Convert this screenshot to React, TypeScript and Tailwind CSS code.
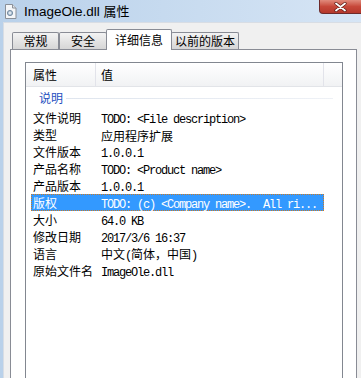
import React from 'react';

const cjkFont = '"Noto Sans CJK SC", "Noto Sans", sans-serif';

const rows: { name: string; value: string; selected?: boolean }[] = [
  { name: '文件说明', value: 'TODO: <File description>' },
  { name: '类型', value: '应用程序扩展' },
  { name: '文件版本', value: '1.0.0.1' },
  { name: '产品名称', value: 'TODO: <Product name>' },
  { name: '产品版本', value: '1.0.0.1' },
  { name: '版权', value: 'TODO: (c) <Company name>.  All ri...', selected: true },
  { name: '大小', value: '64.0 KB' },
  { name: '修改日期', value: '2017/3/6 16:37' },
  { name: '语言', value: '中文(简体，中国)' },
  { name: '原始文件名', value: 'ImageOle.dll' },
];

// SimSun-like mix: latin runs at 6px per char, CJK runs at 12px
const Mixed = ({ text }: { text: string }) => {
  const parts = text.split(/([\u3000-\u9fff\uff00-\uffef]+)/).filter(Boolean);
  return (
    <span className="whitespace-pre">
      {parts.map((p, i) =>
        /[\u3000-\u9fff\uff00-\uffef]/.test(p) ? (
          <span key={i} className="text-[12px]" style={{ fontFamily: cjkFont }}>
            {p}
          </span>
        ) : (
          <span key={i} className="text-[12px] tracking-[-1.2px] font-['Liberation_Mono',monospace]">
            {p}
          </span>
        )
      )}
    </span>
  );
};

const FileIcon = () => (
  <svg width="13" height="15" viewBox="0 0 13 15">
    <path d="M1.5 0.5h7l3.5 3.5v10.5h-10.5z" fill="#f4f6f8" stroke="#8a9098" />
    <path d="M8.5 0.5v3.5h3.5" fill="#dfe3e8" stroke="#8a9098" />
    <circle cx="6" cy="9" r="2.6" fill="#b6c8d8" stroke="#5f7890" strokeWidth="0.8" />
    <circle cx="6" cy="9" r="0.9" fill="#f4f6f8" />
  </svg>
);

const Tab = ({ label, active, w }: { label: string; active?: boolean; w: string }) => (
  <div
    className={`${w} shrink-0 whitespace-nowrap flex items-center justify-center border border-[#898c95] border-b-0 text-[12px] text-black rounded-t-[2px] ${
      active
        ? 'h-[21px] -mb-[1px] bg-white relative z-10 -mx-[1px]'
        : 'h-[17px] bg-gradient-to-b from-[#f3f3f3] to-[#d6d6d6]'
    }`}
    style={{ fontFamily: cjkFont }}
  >
    {label}
  </div>
);

export default function App() {
  return (
    <div className="w-[361px] h-[378px] overflow-hidden flex flex-col bg-gradient-to-r from-[#b9d1ea] to-[#d6e5f5]">
      {/* title bar */}
      <div className="h-[22px] shrink-0 flex items-center relative pl-[4px]">
        <FileIcon />
        <span className="ml-[7px] text-[13.5px] text-black font-['Liberation_Sans',sans-serif] leading-none">
          ImageOle.dll <span style={{ fontFamily: cjkFont }} className="text-[13px]">属性</span>
        </span>
        <div className="absolute right-[-6px] top-0 w-[48px] h-[14px] rounded-b-[4px] border border-t-0 border-[#6d2a2a] bg-gradient-to-b from-[#e08a7c] via-[#c7483a] to-[#b5382c] flex items-center justify-center pr-[6px]">
          <svg width="13" height="10" viewBox="0 0 13 10">
            <path d="M2 1.5l9 7M11 1.5l-9 7" stroke="#5a1a14" strokeWidth="3.2" strokeLinecap="round" />
            <path d="M2 1.5l9 7M11 1.5l-9 7" stroke="#ffffff" strokeWidth="1.8" strokeLinecap="round" />
          </svg>
        </div>
      </div>

      {/* dialog body */}
      <div className="flex-1 ml-[3px] bg-[#f0f0f0] border-t border-l border-[#d8dde4] pt-[5px] flex flex-col">
        <div className="flex items-end pl-[8px] h-[21px] relative z-10">
          <Tab label="常规" w="w-[47px]" />
          <Tab label="安全" w="w-[48px]" />
          <Tab label="详细信息" w="w-[66px]" active />
          <Tab label="以前的版本" w="w-[68px]" />
        </div>

        {/* tab panel */}
        <div className="flex-1 ml-[6px] w-[347px] bg-white border border-[#898c95] pt-[12px] pl-[14px]">
          <div className="w-[318px] h-[400px] border border-[#828790] bg-white">
            {/* header */}
            <div
              className="h-[24px] flex items-center bg-gradient-to-b from-white to-[#f1f2f4] border-b border-[#e2e4e8] text-[12px] text-black"
              style={{ fontFamily: cjkFont }}
            >
              <div className="w-[70px] h-full flex items-center pl-[7px] border-r border-[#e2e3ea]">属性</div>
              <div className="w-[228px] h-full flex items-center pl-[5px] border-r border-[#e2e3ea]">值</div>
            </div>

            {/* group */}
            <div className="h-[22px] flex items-center pl-[13px] pr-[9px]">
              <span className="text-[12px] text-[#1e4fc0]" style={{ fontFamily: cjkFont }}>
                说明
              </span>
              <div className="flex-1 h-[1px] ml-[3px] mt-[1px] bg-gradient-to-r from-[#dfe5ee] to-[#eef1f6]" />
            </div>

            {rows.map((r) => (
              <div key={r.name} className="h-[17px] flex items-center pl-[5px]">
                <div
                  className={`w-[293px] h-[17px] flex items-center ${
                    r.selected ? 'bg-[#3399ff] text-white border border-dotted border-[#cc7a22]' : 'text-black'
                  }`}
                >
                  <div
                    className={`w-[70px] text-[12px] leading-none ${r.selected ? 'pl-[1px]' : 'pl-[2px]'}`}
                    style={{ fontFamily: cjkFont }}
                  >
                    {r.name}
                  </div>
                  <div className={`flex-1 leading-none overflow-hidden ${r.selected ? '-ml-[1px]' : ''}`}>
                    <Mixed text={r.value} />
                  </div>
                </div>
              </div>
            ))}
          </div>
        </div>
      </div>
    </div>
  );
}
